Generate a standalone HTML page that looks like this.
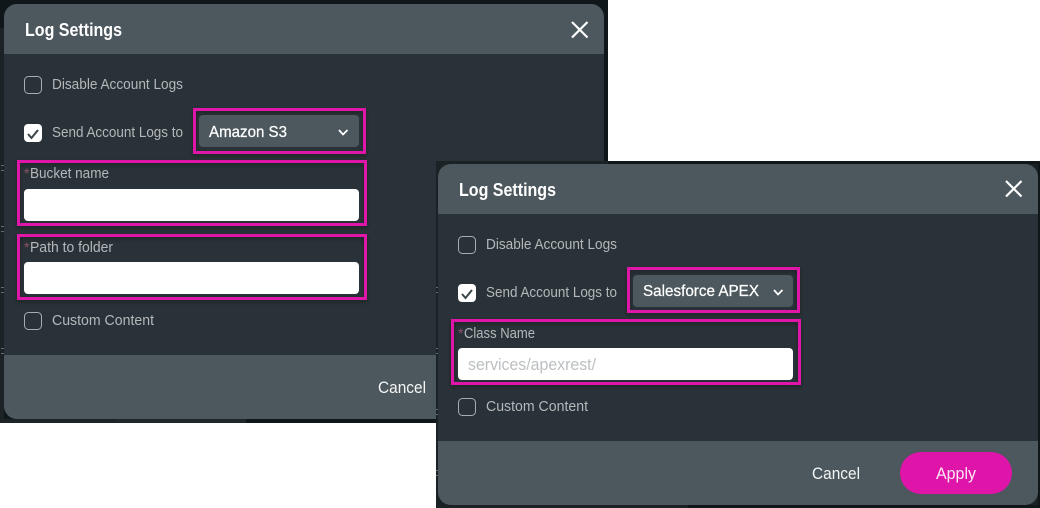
<!DOCTYPE html>
<html>
<head>
<meta charset="utf-8">
<style>
html,body{margin:0;padding:0;background:#fff;width:1040px;height:508px;overflow:hidden}
svg{display:block}
text{font-family:"Liberation Sans",sans-serif;white-space:pre}
.l{font-size:14.5px;fill:#b4b8ba}
.w{fill:#fff}
.d{font-size:16px;fill:#fff;stroke:#fff;stroke-width:.25px}
</style>
</head>
<body>
<svg width="1040" height="508" viewBox="0 0 1040 508" xmlns="http://www.w3.org/2000/svg">
<defs>
<filter id="s" x="-10%" y="-20%" width="120%" height="150%"><feDropShadow dx="0" dy="2" stdDeviation="2" flood-color="#000" flood-opacity=".35"/></filter>
<clipPath id="m1"><rect x="4" y="4" width="600" height="415" rx="13"/></clipPath>
<clipPath id="m2"><rect x="438" y="164" width="600" height="341" rx="13"/></clipPath>
</defs>
<rect width="1040" height="508" fill="#fff"/>

<!-- left window -->
<rect x="0" y="0" width="608" height="423" fill="#10171a"/>
<rect x="0" y="28" width="4" height="395" fill="#1c2327"/>
<rect x="4" y="419" width="112" height="4" fill="#1d2427"/>
<rect x="116" y="419" width="130" height="4" fill="#20272a"/>
<g fill="#646c70"><rect x="1" y="165" width="3" height="1"/><rect x="1" y="170" width="3" height="1"/><rect x="1" y="226" width="3" height="1"/><rect x="1" y="231" width="3" height="1"/><rect x="1" y="287" width="3" height="1"/><rect x="1" y="292" width="3" height="1"/><rect x="1" y="348" width="3" height="1"/><rect x="1" y="353" width="3" height="1"/></g>
<g clip-path="url(#m1)">
<rect x="4" y="4" width="600" height="415" fill="#293238"/>
<rect x="4" y="4" width="600" height="50" fill="#4c585e"/>
<rect x="4" y="355" width="600" height="64" fill="#4c585e"/>
</g>
<text x="25" y="36" font-size="18" font-weight="700" class="w" textLength="97" lengthAdjust="spacingAndGlyphs">Log Settings</text>
<path d="M572 22L587.500 37.500M587.500 22L572 37.500" stroke="#fff" stroke-width="2.200" fill="none"/>

<rect x="24.500" y="76.500" width="17" height="17" rx="4" fill="none" stroke="#a8adaf"/>
<text x="52" y="89" class="l" textLength="131" lengthAdjust="spacingAndGlyphs">Disable Account Logs</text>
<rect x="24" y="124" width="18" height="18" rx="4" fill="#fff"/>
<path d="M28 134L31.500 138L38 130" stroke="#3a4448" stroke-width="2" fill="none"/>
<text x="52" y="137" class="l" textLength="131" lengthAdjust="spacingAndGlyphs">Send Account Logs to</text>

<rect x="194.500" y="109.500" width="170" height="43" fill="none" stroke="#e014a8" stroke-width="3" filter="url(#s)"/>
<rect x="199" y="115" width="160" height="32" rx="4" fill="#4c585e"/>
<text x="209" y="137" class="d" textLength="78" lengthAdjust="spacingAndGlyphs">Amazon S3</text>
<path d="M339 130L343 134.500L347.500 130" stroke="#fff" stroke-width="1.800" fill="none"/>

<rect x="18.500" y="161.500" width="347" height="63" fill="none" stroke="#e014a8" stroke-width="3" filter="url(#s)"/>
<text x="24" y="178" font-size="14" fill="#8d4f66">*</text>
<text x="30" y="178" class="l" textLength="79" lengthAdjust="spacingAndGlyphs">Bucket name</text>
<rect x="24" y="189" width="335" height="32" rx="4" fill="#fff"/>

<rect x="18.500" y="235.500" width="347" height="63" fill="none" stroke="#e014a8" stroke-width="3" filter="url(#s)"/>
<text x="24" y="252" font-size="14" fill="#8d4f66">*</text>
<text x="30" y="252" class="l" textLength="83" lengthAdjust="spacingAndGlyphs">Path to folder</text>
<rect x="24" y="262" width="335" height="32" rx="4" fill="#fff"/>

<rect x="24.500" y="312.500" width="17" height="17" rx="4" fill="none" stroke="#a8adaf"/>
<text x="52" y="325" class="l" textLength="102" lengthAdjust="spacingAndGlyphs">Custom Content</text>
<text x="378" y="393" font-size="17" fill="#f4f5f5" textLength="48" lengthAdjust="spacingAndGlyphs">Cancel</text>

<!-- right window -->
<rect x="436" y="161" width="604" height="347" fill="#1b2226"/>
<rect x="608" y="161" width="432" height="3" fill="#10171a"/>
<rect x="1038" y="161" width="2" height="347" fill="#10171a"/>
<rect x="688" y="505" width="352" height="3" fill="#10171a"/>
<g fill="#646c70"><rect x="436" y="287" width="2" height="1"/><rect x="436" y="292" width="2" height="1"/><rect x="436" y="348" width="2" height="1"/><rect x="436" y="353" width="2" height="1"/><rect x="436" y="409" width="2" height="1"/><rect x="436" y="414" width="2" height="1"/><rect x="436" y="470" width="2" height="1"/><rect x="436" y="475" width="2" height="1"/></g>
<g clip-path="url(#m2)">
<rect x="438" y="164" width="600" height="341" fill="#293238"/>
<rect x="438" y="164" width="600" height="50" fill="#4c585e"/>
<rect x="438" y="441" width="600" height="64" fill="#4c585e"/>
</g>
<text x="459" y="196" font-size="18" font-weight="700" class="w" textLength="97" lengthAdjust="spacingAndGlyphs">Log Settings</text>
<path d="M1006 181L1021.500 196.500M1021.500 181L1006 196.500" stroke="#fff" stroke-width="2.200" fill="none"/>

<rect x="458.500" y="236.500" width="17" height="17" rx="4" fill="none" stroke="#a8adaf"/>
<text x="486" y="249" class="l" textLength="131" lengthAdjust="spacingAndGlyphs">Disable Account Logs</text>
<rect x="458" y="284" width="18" height="18" rx="4" fill="#fff"/>
<path d="M462 294L465.500 298L472 290" stroke="#3a4448" stroke-width="2" fill="none"/>
<text x="486" y="297" class="l" textLength="131" lengthAdjust="spacingAndGlyphs">Send Account Logs to</text>

<rect x="628.500" y="268.500" width="170" height="43" fill="none" stroke="#e014a8" stroke-width="3" filter="url(#s)"/>
<rect x="633" y="275" width="160" height="32" rx="4" fill="#4c585e"/>
<text x="643" y="296" class="d" textLength="116" lengthAdjust="spacingAndGlyphs">Salesforce APEX</text>
<path d="M774 290L778 294.500L782.500 290" stroke="#fff" stroke-width="1.800" fill="none"/>

<rect x="452.500" y="320.500" width="347" height="63" fill="none" stroke="#e014a8" stroke-width="3" filter="url(#s)"/>
<text x="458" y="338" font-size="14" fill="#8d4f66">*</text>
<text x="464" y="338" class="l" textLength="71" lengthAdjust="spacingAndGlyphs">Class Name</text>
<rect x="458" y="348" width="335" height="32" rx="4" fill="#fff"/>
<text x="468" y="370" font-size="17" fill="#bcbfc1" textLength="128" lengthAdjust="spacingAndGlyphs">services/apexrest/</text>

<rect x="458.500" y="398.500" width="17" height="17" rx="4" fill="none" stroke="#a8adaf"/>
<text x="486" y="411" class="l" textLength="102" lengthAdjust="spacingAndGlyphs">Custom Content</text>

<text x="812" y="479" font-size="17" fill="#f4f5f5" textLength="48" lengthAdjust="spacingAndGlyphs">Cancel</text>
<rect x="900" y="452" width="112" height="42" rx="21" fill="#df14a8"/>
<text x="936" y="479" font-size="17" fill="#fbe6f5" textLength="40" lengthAdjust="spacingAndGlyphs">Apply</text>
</svg>
</body>
</html>
